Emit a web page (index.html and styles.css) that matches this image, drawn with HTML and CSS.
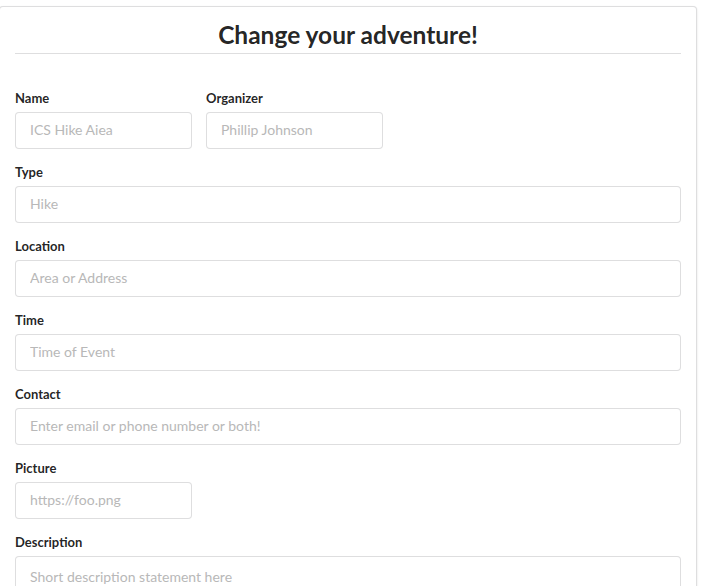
FILE: index.html
```html
<!DOCTYPE html>
<html>
<head>
<meta charset="utf-8">
<link rel="stylesheet" href="styles.css">
</head>
<body>
<div class="card">
  <h2 class="title">Change your adventure!</h2>
  <form class="form">
    <div class="row">
      <div class="field small">
        <label class="label">Name</label>
        <input class="input" type="text" placeholder="ICS Hike Aiea">
      </div>
      <div class="field small">
        <label class="label">Organizer</label>
        <input class="input" type="text" placeholder="Phillip Johnson">
      </div>
    </div>
    <div class="field">
      <label class="label">Type</label>
      <input class="input" type="text" placeholder="Hike">
    </div>
    <div class="field">
      <label class="label">Location</label>
      <input class="input" type="text" placeholder="Area or Address">
    </div>
    <div class="field">
      <label class="label">Time</label>
      <input class="input" type="text" placeholder="Time of Event">
    </div>
    <div class="field">
      <label class="label">Contact</label>
      <input class="input" type="text" placeholder="Enter email or phone number or both!">
    </div>
    <div class="field small">
      <label class="label">Picture</label>
      <input class="input" type="text" placeholder="https://foo.png">
    </div>
    <div class="field">
      <label class="label">Description</label>
      <textarea class="input area" placeholder="Short description statement here"></textarea>
    </div>
  </form>
</div>
</body>
</html>
```
FILE: styles.css
```css
html, body {
  margin: 0;
  padding: 0;
  background: #ffffff;
  overflow: hidden;
}
body {
  font-family: Lato, "Liberation Sans", sans-serif;
  color: rgba(0, 0, 0, 0.87);
  font-size: 14px;
}
.card {
  box-sizing: border-box;
  margin: 6px 0 0 -1px;
  width: 698px;
  border: 1px solid rgba(34, 36, 38, 0.15);
  border-radius: 4px;
  box-shadow: 0 1px 2px 0 rgba(34, 36, 38, 0.15);
  padding: 12px 15px 20px 15px;
  background: #fff;
}
.title {
  margin: 0;
  font-size: 24.5px;
  line-height: 31px;
  font-weight: 700;
  text-align: center;
  color: rgba(0, 0, 0, 0.87);
  padding-bottom: 3px;
  border-bottom: 1px solid rgba(34, 36, 38, 0.15);
}
.form {
  margin-top: 36px;
  display: flex;
  flex-direction: column;
  gap: 15px;
}
.row {
  display: flex;
  gap: 14px;
}
.field {
  display: flex;
  flex-direction: column;
}
.field.small {
  width: 177px;
}
.label {
  font-size: 13px;
  line-height: 16px;
  font-weight: 700;
  margin-bottom: 6px;
  color: rgba(0, 0, 0, 0.87);
}
.input {
  box-sizing: border-box;
  height: 37px;
  width: 100%;
  margin: 0;
  padding: 0 14px 2px 14px;
  border: 1px solid rgba(34, 36, 38, 0.15);
  border-radius: 4px;
  font-family: Lato, "Liberation Sans", sans-serif;
  font-size: 14px;
  color: rgba(0, 0, 0, 0.87);
  background: #fff;
  outline: none;
}
.input::placeholder {
  color: #b8b8b8;
}
.area {
  height: 120px;
  padding: 11px 14px;
  line-height: 17px;
  resize: none;
}
```
